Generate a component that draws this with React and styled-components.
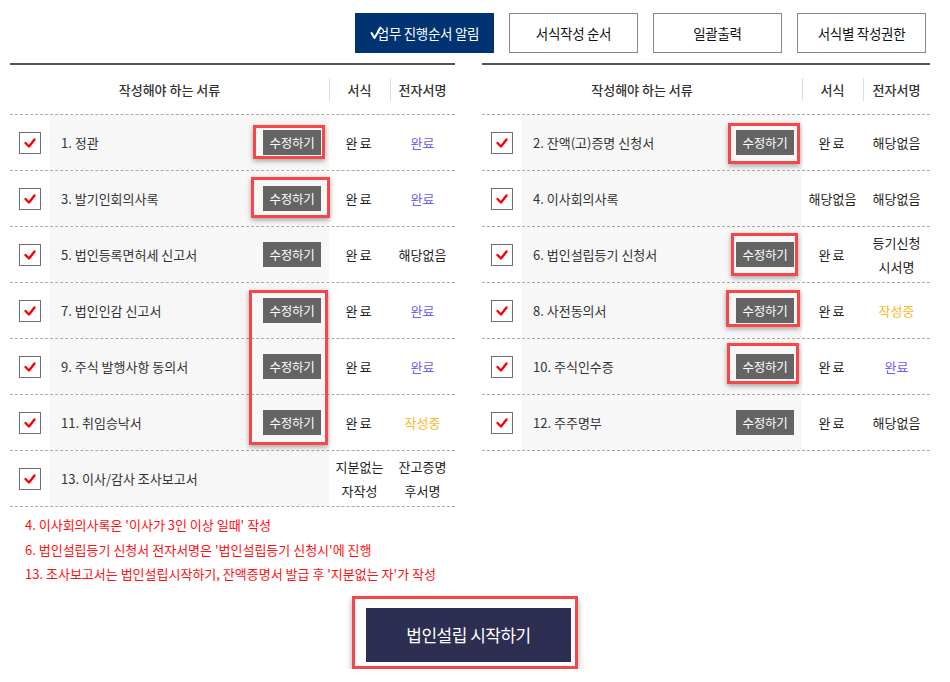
import React from "react";
import styled, { createGlobalStyle } from "styled-components";

const GlobalStyle = createGlobalStyle`
  body {
    margin: 0;
    background: #fff;
    font-family: "Noto Sans CJK KR", "Noto Sans", sans-serif;
    color: #222;
  }
`;

const Page = styled.div`
  width: 950px;
  padding: 13px 20px 0 10px;
  box-sizing: border-box;
`;

const Toolbar = styled.div`
  display: flex;
  justify-content: flex-end;
  gap: 15px;
  padding-right: 4px;
`;

const ToolButton = styled.button`
  height: 40px;
  width: ${(props) => (props.primary ? "139px" : "129px")};
  border: 1px solid ${(props) => (props.primary ? "#003371" : "#8a8a8a")};
  background: ${(props) => (props.primary ? "#003371" : "#fff")};
  color: ${(props) => (props.primary ? "#fff" : "#111")};
  font-family: inherit;
  font-size: 13.5px;
  letter-spacing: -0.3px;
  padding: 0;
  display: flex;
  align-items: center;
  justify-content: center;
`;

const TickIcon = styled.svg`
  margin-right: -5px;
  position: relative;
  z-index: 1;
`;

const Tables = styled.div`
  display: flex;
  justify-content: space-between;
  margin-top: 10px;
  align-items: flex-start;
`;

const Table = styled.div`
  position: relative;
  width: ${(props) => props.width}px;
  border-top: 2px solid #555;
`;

const Row = styled.div`
  display: grid;
  grid-template-columns: ${(props) => props.cols};
  height: ${(props) => (props.head ? "49px" : "55px")};
  border-bottom: 1px dashed #aaa;
`;

const HeadCell = styled.div`
  position: relative;
  display: flex;
  align-items: center;
  justify-content: center;
  font-size: 13px;
  font-weight: 500;
  color: #333;
  grid-column: ${(props) => props.span || "auto"};
  &::before {
    content: "";
    display: ${(props) => (props.divider ? "block" : "none")};
    position: absolute;
    left: 0;
    top: 13px;
    height: 23px;
    border-left: 1px solid #ddd;
  }
`;

const CheckCell = styled.div`
  display: flex;
  align-items: center;
  justify-content: center;
`;

const CheckBox = styled.span`
  width: 20px;
  height: 20px;
  border: 1px solid #707070;
  display: flex;
  align-items: center;
  justify-content: center;
  background: #fff;
`;

const NameCell = styled.div`
  background: #f7f7f7;
  display: flex;
  align-items: center;
  justify-content: space-between;
  padding: 0 8px 0 11px;
  font-size: 13px;
  color: #333;
`;

const EditButton = styled.span`
  display: inline-flex;
  align-items: center;
  justify-content: center;
  width: 58px;
  height: 25px;
  background: #646464;
  color: #fff;
  font-size: 12.5px;
  letter-spacing: -0.3px;
`;

const Highlight = styled.span`
  display: inline-flex;
  border: 3px solid #f5474a;
  padding: ${(props) => props.pad.map((p) => p + "px").join(" ")};
  margin: ${(props) => props.pad.map((p) => -(p + 3) + "px").join(" ")};
  box-shadow: 0 2px 5px rgba(0, 0, 0, 0.35);
`;

const GroupHighlight = styled.div`
  position: absolute;
  left: 239px;
  top: 225px;
  width: 73px;
  height: 149px;
  border: 3px solid #f5474a;
  box-shadow: 0 2px 5px rgba(0, 0, 0, 0.35);
  pointer-events: none;
`;

const Status = styled.div`
  display: flex;
  align-items: center;
  justify-content: center;
  text-align: center;
  white-space: pre-line;
  font-size: 13px;
  line-height: 24px;
  letter-spacing: ${(props) => (props.spaced ? "2px" : "0")};
  color: ${(props) =>
    props.tone === "blue" ? "#6a5ff0" : props.tone === "orange" ? "#fbb829" : "#222"};
`;

const Notes = styled.div`
  padding: 6px 0 0 15px;
  font-size: 13px;
  line-height: 24.5px;
  color: #ff1010;
`;

const StartArea = styled.div`
  display: flex;
  justify-content: center;
  margin-top: 9px;
  padding-right: 10px;
`;

const StartFrame = styled.div`
  border: 3px solid #f5474a;
  padding: 9px 4px 4px 11px;
  box-shadow: 0 3px 6px rgba(0, 0, 0, 0.35);
`;

const StartButton = styled.button`
  width: 205px;
  height: 54px;
  border: none;
  background: #2d2e52;
  color: #fff;
  font-family: inherit;
  font-size: 17px;
  letter-spacing: -0.5px;
`;

const Check = () => (
  <CheckBox>
    <svg width="14" height="14" viewBox="0 0 14 14">
      <polyline
        points="2.5,7 6,10.5 11.5,3.5"
        fill="none"
        stroke="#ff0000"
        strokeWidth="2.4"
        strokeLinecap="round"
        strokeLinejoin="round"
      />
    </svg>
  </CheckBox>
);

const leftRows = [
  { name: "1. 정관", edit: true, pad: [2, 1, 1, 7], form: "완료", sign: "완료", tone: "blue" },
  { name: "3. 발기인회의사록", edit: true, pad: [6, 6, 4, 9], form: "완료", sign: "완료", tone: "blue" },
  { name: "5. 법인등록면허세 신고서", edit: true, form: "완료", sign: "해당없음" },
  { name: "7. 법인인감 신고서", edit: true, form: "완료", sign: "완료", tone: "blue" },
  { name: "9. 주식 발행사항 동의서", edit: true, form: "완료", sign: "완료", tone: "blue" },
  { name: "11. 취임승낙서", edit: true, form: "완료", sign: "작성중", tone: "orange" },
  { name: "13. 이사/감사 조사보고서", form: "지분없는\n자작성", sign: "잔고증명\n후서명" },
];

const rightRows = [
  { name: "2. 잔액(고)증명 신청서", edit: true, pad: [4, 3, 6, 5], form: "완료", sign: "해당없음" },
  { name: "4. 이사회의사록", form: "해당없음", sign: "해당없음" },
  { name: "6. 법인설립등기 신청서", edit: true, pad: [6, 1, 6, 2], form: "완료", sign: "등기신청\n시서명" },
  { name: "8. 사전동의서", edit: true, pad: [5, 3, 1, 7], form: "완료", sign: "작성중", tone: "orange" },
  { name: "10. 주식인수증", edit: true, pad: [8, 2, 2, 6], form: "완료", sign: "완료", tone: "blue" },
  { name: "12. 주주명부", edit: true, form: "완료", sign: "해당없음" },
];

function DocTable({ rows, width, cols, group }) {
  return (
    <Table width={width}>
      <Row head cols={cols}>
        <HeadCell span="1 / 3">작성해야 하는 서류</HeadCell>
        <HeadCell divider>서식</HeadCell>
        <HeadCell divider>전자서명</HeadCell>
      </Row>
      {rows.map((r) => (
        <Row key={r.name} cols={cols}>
          <CheckCell>
            <Check />
          </CheckCell>
          <NameCell>
            <span>{r.name}</span>
            {r.edit &&
              (r.pad ? (
                <Highlight pad={r.pad}>
                  <EditButton>수정하기</EditButton>
                </Highlight>
              ) : (
                <EditButton>수정하기</EditButton>
              ))}
          </NameCell>
          <Status spaced={r.form === "완료"}>{r.form}</Status>
          <Status tone={r.tone}>{r.sign}</Status>
        </Row>
      ))}
      {group && <GroupHighlight />}
    </Table>
  );
}

export default function App() {
  return (
    <Page>
      <GlobalStyle />
      <Toolbar>
        <ToolButton primary>
          <TickIcon width="12" height="14" viewBox="0 0 12 14">
            <polyline
              points="1.5,7 4.5,12 10.5,1.5"
              fill="none"
              stroke="#fff"
              strokeWidth="2"
              strokeLinecap="round"
              strokeLinejoin="round"
            />
          </TickIcon>
          업무 진행순서 알림
        </ToolButton>
        <ToolButton>서식작성 순서</ToolButton>
        <ToolButton>일괄출력</ToolButton>
        <ToolButton>서식별 작성권한</ToolButton>
      </Toolbar>
      <Tables>
        <DocTable rows={leftRows} width={445} cols="40px 279px 61px 1fr" group />
        <DocTable rows={rightRows} width={448} cols="40px 280px 61px 1fr" />
      </Tables>
      <Notes>
        <div>4. 이사회의사록은 '이사가 3인 이상 일때' 작성</div>
        <div>6. 법인설립등기 신청서 전자서명은 '법인설립등기 신청시'에 진행</div>
        <div>13. 조사보고서는 법인설립시작하기, 잔액증명서 발급 후 '지분없는 자'가 작성</div>
      </Notes>
      <StartArea>
        <StartFrame>
          <StartButton>법인설립 시작하기</StartButton>
        </StartFrame>
      </StartArea>
    </Page>
  );
}
